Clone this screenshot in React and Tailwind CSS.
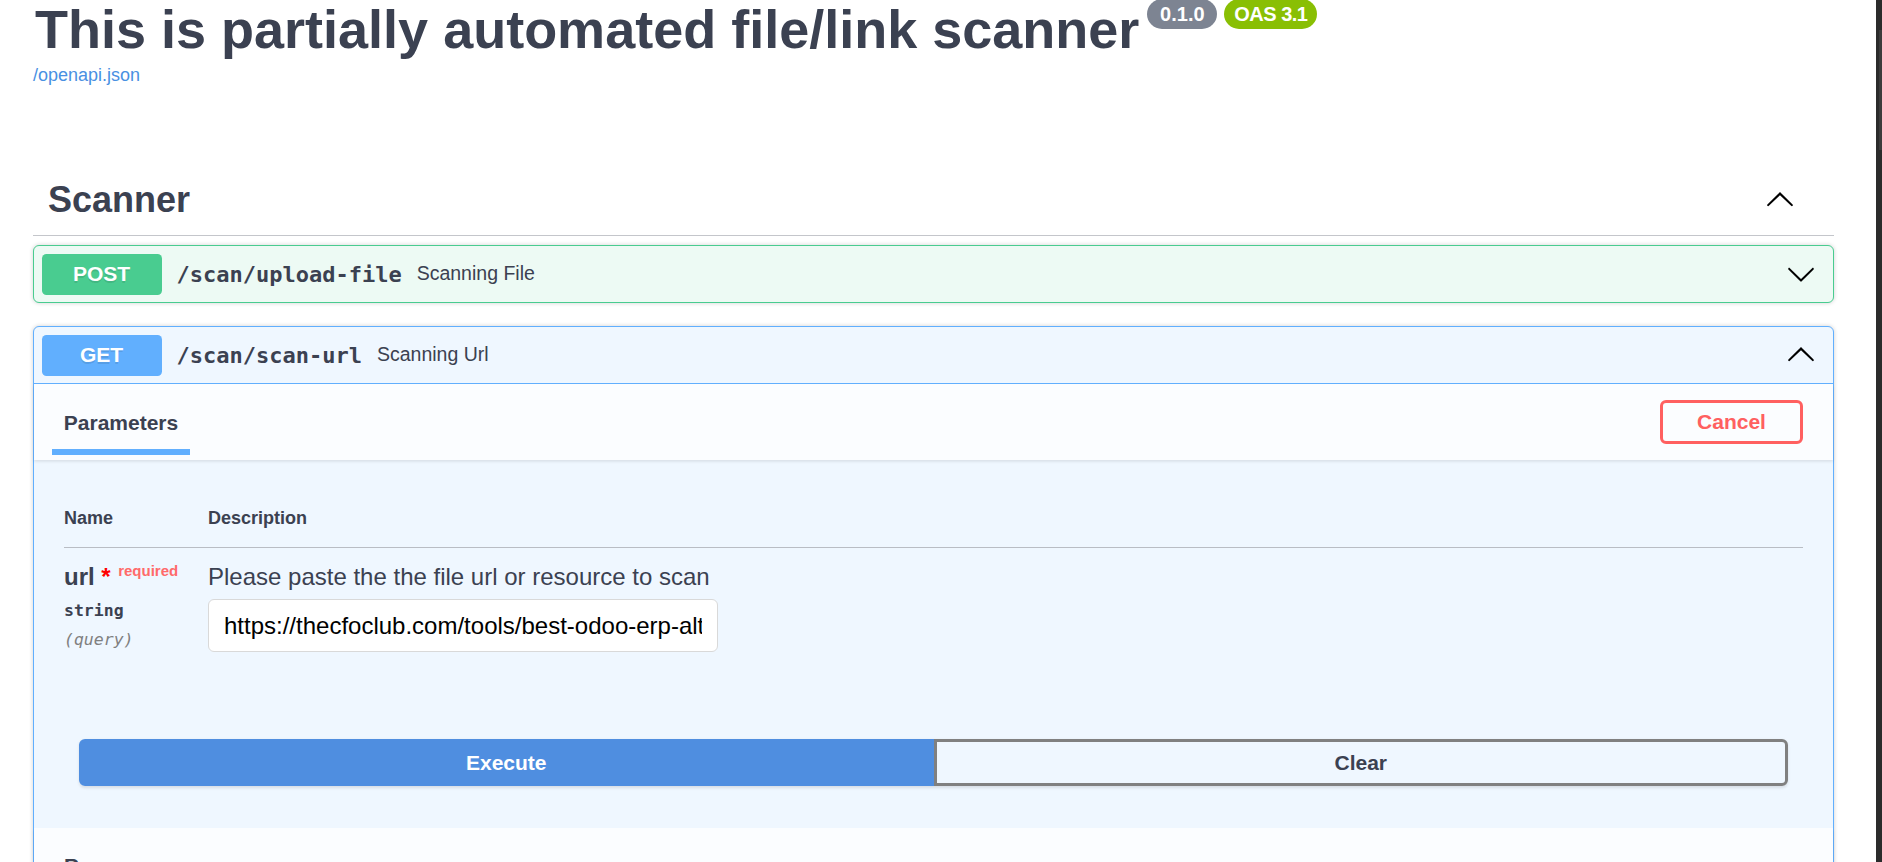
import React from "react";

const ARROW =
  "M17.418 6.109c.272-.268.709-.268.979 0s.271.701 0 .969l-7.908 7.83c-.27.268-.707.268-.979 0l-7.908-7.83c-.27-.268-.27-.701 0-.969.271-.268.709-.268.979 0L10 13.25l7.418-7.141z";

function Arrow({ up }) {
  return (
    <svg
      viewBox="0 0 20 20"
      width="30"
      height="30"
      className={up ? "rotate-180 shrink-0" : "shrink-0"}
    >
      <path d={ARROW} fill="#000" />
    </svg>
  );
}

function Summary({ method, path, desc, up, methodBg, border }) {
  return (
    <div
      className={
        "flex items-center p-[7.5px] " + (border ? "border-b border-[#61affe]" : "")
      }
    >
      <div
        className={
          "w-[120px] h-[41px] shrink-0 rounded-[4.5px] flex items-center justify-center text-white text-[21px] font-bold [text-shadow:0_1.5px_0_rgba(0,0,0,0.1)] " +
          methodBg
        }
      >
        {method}
      </div>
      <span className="px-[15px] font-['DejaVu_Sans_Mono',monospace] font-bold text-[22px] text-[#3b4151]">
        {path}
      </span>
      <span className="text-[19.5px] text-[#3b4151]">{desc}</span>
      <div className="ml-auto mr-[9.5px] flex">
        <Arrow up={up} />
      </div>
    </div>
  );
}

export default function App() {
  return (
    <div className="w-[1882px] h-[862px] overflow-hidden flex items-start bg-white font-['Liberation_Sans',Arial,sans-serif] text-[#3b4151]">
      <div className="w-[1876px] shrink-0 pl-[33px] pr-[42px]">
        {/* Info */}
        <div className="flex items-start mt-[-2px]">
          <h2 className="text-[54px] leading-[62px] font-bold text-[#3b4151] pl-[2px] whitespace-nowrap">
            This is partially automated file/link scanner
          </h2>
          <div className="flex gap-[7px] ml-[8px] mt-[1px]">
            <span className="w-[70px] h-[30px] rounded-full bg-[#7d8492] text-white text-[20px] font-bold flex items-center justify-center">
              0.1.0
            </span>
            <span className="w-[93px] h-[30px] rounded-full bg-[#89bf04] text-white text-[20px] font-bold flex items-center justify-center whitespace-nowrap tracking-[-0.5px]">
              OAS 3.1
            </span>
          </div>
        </div>
        <a className="block text-[18px] leading-[21px] text-[#4990e2] mt-[5px] w-fit">
          /openapi.json
        </a>

        {/* Tag section */}
        <div className="mt-[78px] h-[72px] border-b border-[#c4c6cb] flex items-center pl-[15px] pr-[39px]">
          <h3 className="text-[36px] font-bold leading-[41px]">Scanner</h3>
          <div className="ml-auto flex">
            <Arrow up />
          </div>
        </div>

        {/* POST */}
        <div className="mt-[9px] rounded-[6px] border border-[#49cc90] bg-[#edfaf4] shadow-[0_0_4.5px_rgba(0,0,0,0.19)]">
          <Summary
            method="POST"
            path="/scan/upload-file"
            desc="Scanning File"
            methodBg="bg-[#49cc90]"
          />
        </div>

        {/* GET */}
        <div className="mt-[23px] rounded-[6px] border border-[#61affe] bg-[#eff7ff] shadow-[0_0_4.5px_rgba(0,0,0,0.19)]">
          <Summary
            method="GET"
            path="/scan/scan-url"
            desc="Scanning Url"
            methodBg="bg-[#61affe]"
            up
            border
          />

          {/* Parameters header */}
          <div className="h-[76px] bg-[#fbfdff] shadow-[0_1.5px_3px_rgba(0,0,0,0.1)] flex items-center justify-between pl-[18px] pr-[30px] relative">
            <div className="self-end mb-[5px] flex flex-col items-center">
              <span className="text-[21px] leading-[24px] font-bold">Parameters</span>
              <div className="w-[138px] h-[6px] bg-[#61affe] mt-[14.5px]" />
            </div>
            <button className="w-[143px] h-[44px] border-[3px] border-[#ff6060] rounded-[6px] text-[#ff6060] text-[21px] font-bold bg-transparent">
              Cancel
            </button>
          </div>

          {/* Parameters body */}
          <div className="px-[30px] pt-[30px]">
            <div className="grid grid-cols-[144px_1fr] border-b border-[#b9bdc4] text-[18px] leading-[21px] font-bold pt-[18px] pb-[18px]">
              <span>Name</span>
              <span>Description</span>
            </div>
            <div className="grid grid-cols-[144px_1fr] pt-[15px]">
              <div className="flex flex-col">
                <div className="text-[24px] leading-[28px] font-bold whitespace-nowrap">
                  url
                  <span className="text-[#ff0000]">&nbsp;*</span>
                  <span className="relative top-[-9px] text-[15px] px-[7.5px] text-[#ff6a6a]">
                    required
                  </span>
                </div>
                <div className="mt-[7px] leading-[20px] text-[16.5px] font-['DejaVu_Sans_Mono',monospace] font-semibold">
                  string
                </div>
                <div className="mt-[9px] leading-[20px] text-[16.5px] font-['DejaVu_Sans_Mono',monospace] italic text-[#808080]">
                  (query)
                </div>
              </div>
              <div className="flex flex-col">
                <p className="text-[24px] leading-[28px]">
                  Please paste the the file url or resource to scan
                </p>
                <input
                  type="text"
                  readOnly
                  value="https://thecfoclub.com/tools/best-odoo-erp-alternatives/"
                  className="mt-[8px] w-[510px] h-[53px] border border-[#d9d9d9] rounded-[6px] px-[15px] text-[24px] text-black bg-white outline-none font-['Liberation_Sans',Arial,sans-serif]"
                />
              </div>
            </div>
          </div>

          {/* Buttons */}
          <div className="px-[45px] pt-[87px] pb-[42px]">
            <div className="flex h-[47px] shadow-[0_1.5px_3px_rgba(0,0,0,0.1)] rounded-[6px]">
              <button className="flex-1 bg-[#4f8ee0] border-[3px] border-[#4f8ee0] rounded-l-[6px] text-white text-[21px] font-bold">
                Execute
              </button>
              <button className="flex-1 bg-transparent border-[3px] border-[#808080] rounded-r-[6px] text-[#3b4151] text-[21px] font-bold">
                Clear
              </button>
            </div>
          </div>

          {/* Responses header */}
          <div className="h-[76px] bg-[#fbfdff] shadow-[0_1.5px_3px_rgba(0,0,0,0.1)] flex items-center px-[30px]">
            <h4 className="text-[21px] leading-[24px] font-bold">Responses</h4>
          </div>
        </div>
      </div>
      {/* scrollbar */}
      <div className="w-[6px] h-[862px] shrink-0 bg-[#2b2b2b] flex flex-col items-end pt-[30px]">
        <div className="w-[3px] h-[120px] bg-[#3c3c3c]" />
      </div>
    </div>
  );
}
